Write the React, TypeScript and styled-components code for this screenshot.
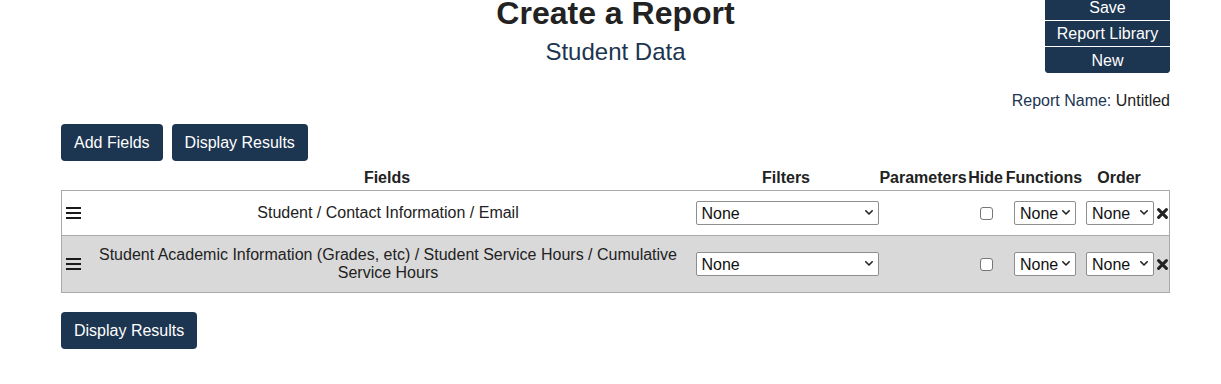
import React from 'react';
import styled, {createGlobalStyle} from "styled-components";

const navy = "#1c3550";

const GlobalStyle = createGlobalStyle`
    html, body {
        margin: 0;
        padding: 0;
        background: #fff;
        font-family: "Liberation Sans", Arial, sans-serif;
        color: #222;
    }
    * {
        box-sizing: border-box;
    }
`

type Field = {
    path: string
    shaded?: boolean
}

const fields: Field[] = [
    {path: "Student / Contact Information / Email"},
    {path: "Student Academic Information (Grades, etc) / Student Service Hours / Cumulative Service Hours", shaded: true},
]

const Chevron = () => (
    <svg width="8" height="5" viewBox="0 0 8 5">
        <polyline points="0.8,0.8 4,4 7.2,0.8" fill="none" stroke="#222" strokeWidth="1.6" strokeLinecap="round" strokeLinejoin="round"/>
    </svg>
)

const RemoveIcon = () => (
    <svg width="11" height="11" viewBox="0 0 11 11">
        <path d="M1.6 1.6 L9.4 9.4 M9.4 1.6 L1.6 9.4" stroke="#222" strokeWidth="3" strokeLinecap="round"/>
    </svg>
)

const Dropdown = ({width}: { width: number }) => (
    <SelectWrap $width={width}>
        <Select defaultValue="none">
            <option value="none">None</option>
        </Select>
        <ChevronHolder><Chevron/></ChevronHolder>
    </SelectWrap>
)

export default function App() {
    return (
        <Page>
            <GlobalStyle/>
            <Header>
                <span/>
                <TitleBlock>
                    <Title>Create a Report</Title>
                    <Subtitle>Student Data</Subtitle>
                </TitleBlock>
                <MenuGroup>
                    <MenuButton>Save</MenuButton>
                    <MenuButton>Report Library</MenuButton>
                    <MenuButton>New</MenuButton>
                </MenuGroup>
            </Header>

            <ReportName>
                <Label>Report Name:</Label> Untitled
            </ReportName>

            <Toolbar>
                <Button>Add Fields</Button>
                <Button>Display Results</Button>
            </Toolbar>

            <HeadRow>
                <span/>
                <HeadCell>Fields</HeadCell>
                <HeadCell>Filters</HeadCell>
                <HeadCell>Parameters</HeadCell>
                <HeadCell>Hide</HeadCell>
                <HeadCell>Functions</HeadCell>
                <HeadCell>Order</HeadCell>
                <span/>
            </HeadRow>

            <Table>
                {fields.map((f) => (
                    <Row key={f.path} $shaded={f.shaded}>
                        <Handle>
                            <span/><span/><span/>
                        </Handle>
                        <FieldName>{f.path}</FieldName>
                        <Cell><Dropdown width={183}/></Cell>
                        <Cell/>
                        <Cell><Checkbox type="checkbox"/></Cell>
                        <Cell><Dropdown width={62}/></Cell>
                        <Cell><Dropdown width={68}/></Cell>
                        <Cell><RemoveIcon/></Cell>
                    </Row>
                ))}
            </Table>

            <Footer>
                <Button>Display Results</Button>
            </Footer>
        </Page>
    );
}

const columns = "20px 612px 186px 88px 37px 80px 70px 14px";

const Page = styled.div`
    width: 1109px;
    margin-left: 61px;
    margin-top: -5px;
`

const Header = styled.header`
    display: grid;
    grid-template-columns: 1fr auto 1fr;
    align-items: start;
`

const TitleBlock = styled.div`
    display: flex;
    flex-direction: column;
    align-items: center;
`

const Title = styled.h1`
    margin: 0 0 6px 0;
    font-size: 32px;
    font-weight: 700;
    line-height: 37px;
    color: #222;
`

const Subtitle = styled.h2`
    margin: 0;
    font-size: 24px;
    font-weight: 400;
    line-height: 28px;
    color: ${navy};
`

const MenuGroup = styled.nav`
    justify-self: end;
    width: 125px;
    display: flex;
    flex-direction: column;
    background: ${navy};
    border-radius: 0 0 4px 4px;
    overflow: hidden;
`

const MenuButton = styled.button`
    height: 26px;
    border: none;
    border-bottom: 1px solid #fff;
    background: ${navy};
    color: #fff;
    font-family: inherit;
    font-size: 16px;
    line-height: 25px;
    padding: 0;

    &:last-child {
        border-bottom: none;
    }
`

const ReportName = styled.div`
    margin-top: 19px;
    text-align: right;
    font-size: 16px;
    line-height: 18px;
    color: #222;
`

const Label = styled.span`
    color: ${navy};
`

const Toolbar = styled.div`
    display: flex;
    gap: 9px;
    margin-top: 14px;
`

const Button = styled.button`
    height: 37px;
    padding: 0 13px;
    border: none;
    border-radius: 4px;
    background: ${navy};
    color: #fff;
    font-family: inherit;
    font-size: 16px;
`

const HeadRow = styled.div`
    display: grid;
    grid-template-columns: ${columns};
    margin-top: 8px;
    padding-bottom: 3px;
`

const HeadCell = styled.div`
    text-align: center;
    font-weight: 700;
    font-size: 16px;
    line-height: 18px;
    white-space: nowrap;
    display: flex;
    justify-content: center;
`

const Table = styled.div`
    border: 1px solid #a9a9a9;
`

const Row = styled.div<{ $shaded?: boolean }>`
    display: grid;
    grid-template-columns: ${columns};
    align-items: center;
    padding: 10px 0;
    background: ${p => p.$shaded ? "#d9d9d9" : "#fff"};

    & + & {
        border-top: 1px solid #a9a9a9;
    }
`

const Handle = styled.div`
    display: flex;
    flex-direction: column;
    gap: 3px;
    padding-left: 4px;

    span {
        display: block;
        width: 15px;
        height: 2px;
        background: #1a1a1a;
    }
`

const FieldName = styled.div`
    text-align: center;
    font-size: 16px;
    line-height: 18px;
    padding: 0 4px;
`

const Cell = styled.div`
    display: flex;
    justify-content: center;
    align-items: center;
`

const SelectWrap = styled.div<{ $width: number }>`
    position: relative;
    width: ${p => p.$width}px;
    height: 24px;
`

const Select = styled.select`
    appearance: none;
    width: 100%;
    height: 100%;
    margin: 0;
    padding: 0 0 0 5px;
    border: 1px solid #8e8e8e;
    border-radius: 2px;
    background: #fff;
    color: #111;
    font-family: "Liberation Sans", Arial, sans-serif;
    font-size: 16px;
`

const ChevronHolder = styled.span`
    position: absolute;
    right: 6px;
    top: 9px;
    display: flex;
    pointer-events: none;
`

const Checkbox = styled.input`
    appearance: none;
    width: 13px;
    height: 13px;
    margin: 0;
    border: 1px solid #767676;
    border-radius: 3px;
    background: #fff;
`

const Footer = styled.div`
    display: flex;
    margin-top: 19px;
`
